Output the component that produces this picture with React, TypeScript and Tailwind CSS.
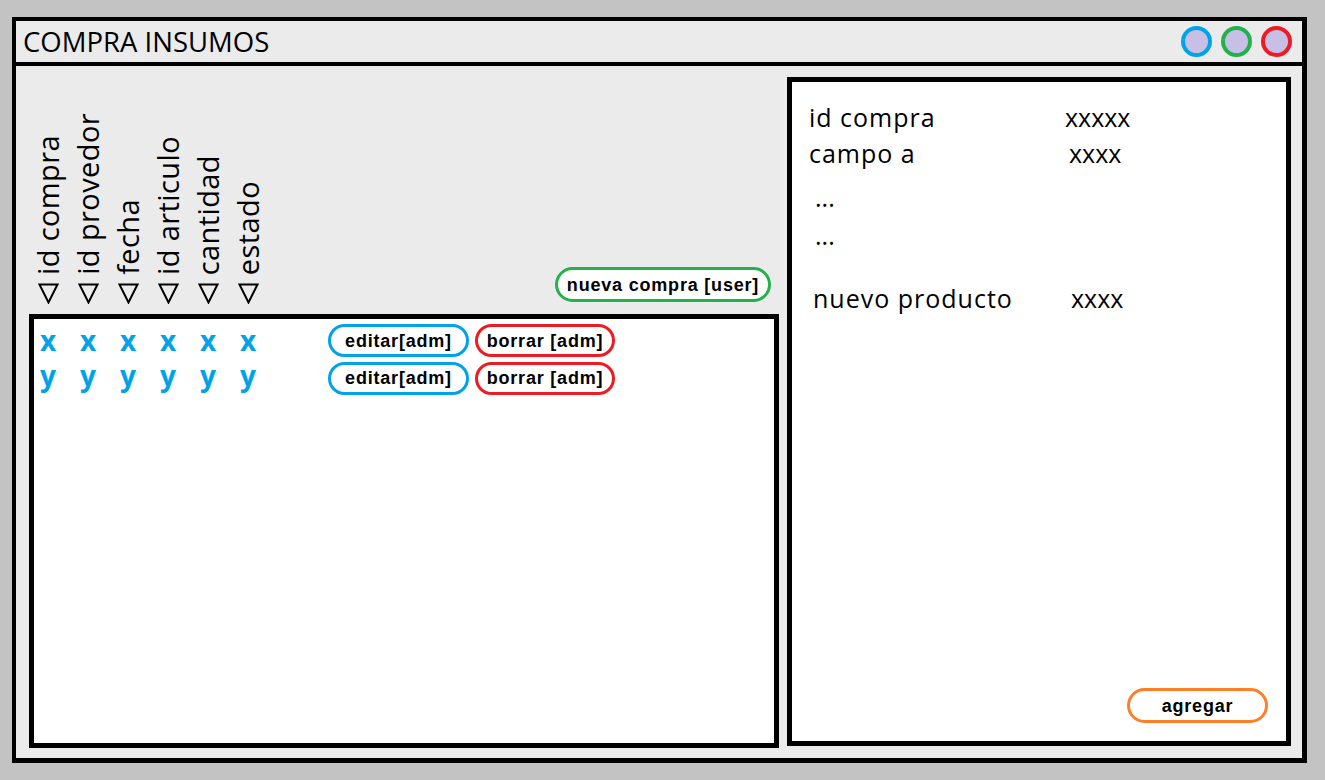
import React from "react";

const headers = ["id compra", "id provedor", "fecha", "id articulo", "cantidad", "estado"];

function Tri() {
  return (
    <svg width="21" height="21" viewBox="0 0 21 21" className="block">
      <polygon points="1.5,1.5 19.5,1.5 10.5,19.5" fill="none" stroke="#000" strokeWidth="2" strokeLinejoin="miter" />
    </svg>
  );
}

function Pill({ label, color, w, h }: { label: string; color: string; w: string; h: string }) {
  return (
    <div
      className={`flex items-center justify-center rounded-full border-[3px] bg-white font-['Liberation_Sans',Arial,sans-serif] text-[18px] font-bold tracking-[0.8px] text-black leading-none ${color} ${w} ${h}`}
    >
      {label}
    </div>
  );
}

function Row({ ch, mt, h, shift }: { ch: string; mt: string; h: string; shift: string }) {
  return (
    <div className={`flex items-center pl-[6px] ${mt} ${h}`}>
      {headers.map((_, i) => (
        <div key={i} className={`w-[40px] font-['Open_Sans',sans-serif] text-[28px] font-bold leading-[33px] text-[#00a2e8] ${shift}`}>
          {ch}
        </div>
      ))}
      <div className="ml-[48px]">
        <Pill label="editar[adm]" color="border-[#00a2e8]" w="w-[141px]" h="h-[33px]" />
      </div>
      <div className="ml-[6px]">
        <Pill label="borrar [adm]" color="border-[#ed1c24]" w="w-[140px]" h="h-[33px]" />
      </div>
    </div>
  );
}

export default function App() {
  return (
    <div className="w-[1325px] h-[780px] bg-[#c3c3c3] pt-[17px] pl-[12px] font-['Open_Sans',sans-serif] text-black">
      <div className="w-[1295px] h-[746px] border-t-4 border-l-4 border-r-[5px] border-b-[5px] border-black bg-[#ebebeb] flex flex-col">
        {/* title bar */}
        <div className="h-[45px] border-b-4 border-black flex items-center justify-between pl-[7px] pr-[10px]">
          <div className="text-[27.5px] leading-none">COMPRA INSUMOS</div>
          <div className="flex items-center gap-[9px]">
            <div className="w-[31px] h-[31px] rounded-full border-4 border-[#00a2e8] bg-[#c8bfe7]" />
            <div className="w-[31px] h-[31px] rounded-full border-4 border-[#22b14c] bg-[#c8bfe7]" />
            <div className="w-[31px] h-[31px] rounded-full border-4 border-[#ed1c24] bg-[#c8bfe7]" />
          </div>
        </div>
        {/* content */}
        <div className="flex flex-1 pl-[13px] pr-[11px]">
          <div className="w-[750px] flex flex-col">
            <div className="h-[248px] flex items-end justify-between">
              <div className="flex items-end ml-[-1px] mb-[10px]">
                {headers.map((t) => (
                  <div key={t} className="w-[40px] flex flex-col items-center">
                    <div className="[writing-mode:vertical-rl] rotate-180 text-[29px] tracking-[0.4px] leading-[38px] whitespace-nowrap mb-[8px]">
                      {t}
                    </div>
                    <Tri />
                  </div>
                ))}
              </div>
              <div className="mb-[12px] mr-[8px]">
                <Pill label="nueva compra [user]" color="border-[#22b14c]" w="w-[216px]" h="h-[35px]" />
              </div>
            </div>
            <div className="h-[434px] border-[5px] border-black bg-white pt-[5px]">
              <Row ch="x" mt="" h="h-[33px]" shift="" />
              <Row ch="y" mt="mt-[4px]" h="h-[34px]" shift="mb-[5px]" />
            </div>
          </div>
          <div className="ml-[8px] mt-[11px] w-[504px] h-[669px] border-[5px] border-black bg-white flex flex-col pl-[17px] pt-[17px]">
            <div className="flex text-[25px] leading-[36px]">
              <div className="w-[256px] tracking-[1px]">id compra</div>
              <div>xxxxx</div>
            </div>
            <div className="flex text-[25px] leading-[36px]">
              <div className="w-[260px] tracking-[1px]">campo a</div>
              <div>xxxx</div>
            </div>
            <div className="flex text-[25px] leading-[36px] mt-[8px] pl-[6px]">...</div>
            <div className="flex text-[25px] leading-[36px] mt-[2px] pl-[6px]">...</div>
            <div className="flex text-[25px] leading-[36px] mt-[27px] pl-[4px]">
              <div className="w-[258px] tracking-[1px]">nuevo producto</div>
              <div>xxxx</div>
            </div>
            <div className="mt-auto self-end mr-[18px] mb-[18px]">
              <Pill label="agregar" color="border-[#ff7f27]" w="w-[141px]" h="h-[35px]" />
            </div>
          </div>
        </div>
      </div>
    </div>
  );
}
